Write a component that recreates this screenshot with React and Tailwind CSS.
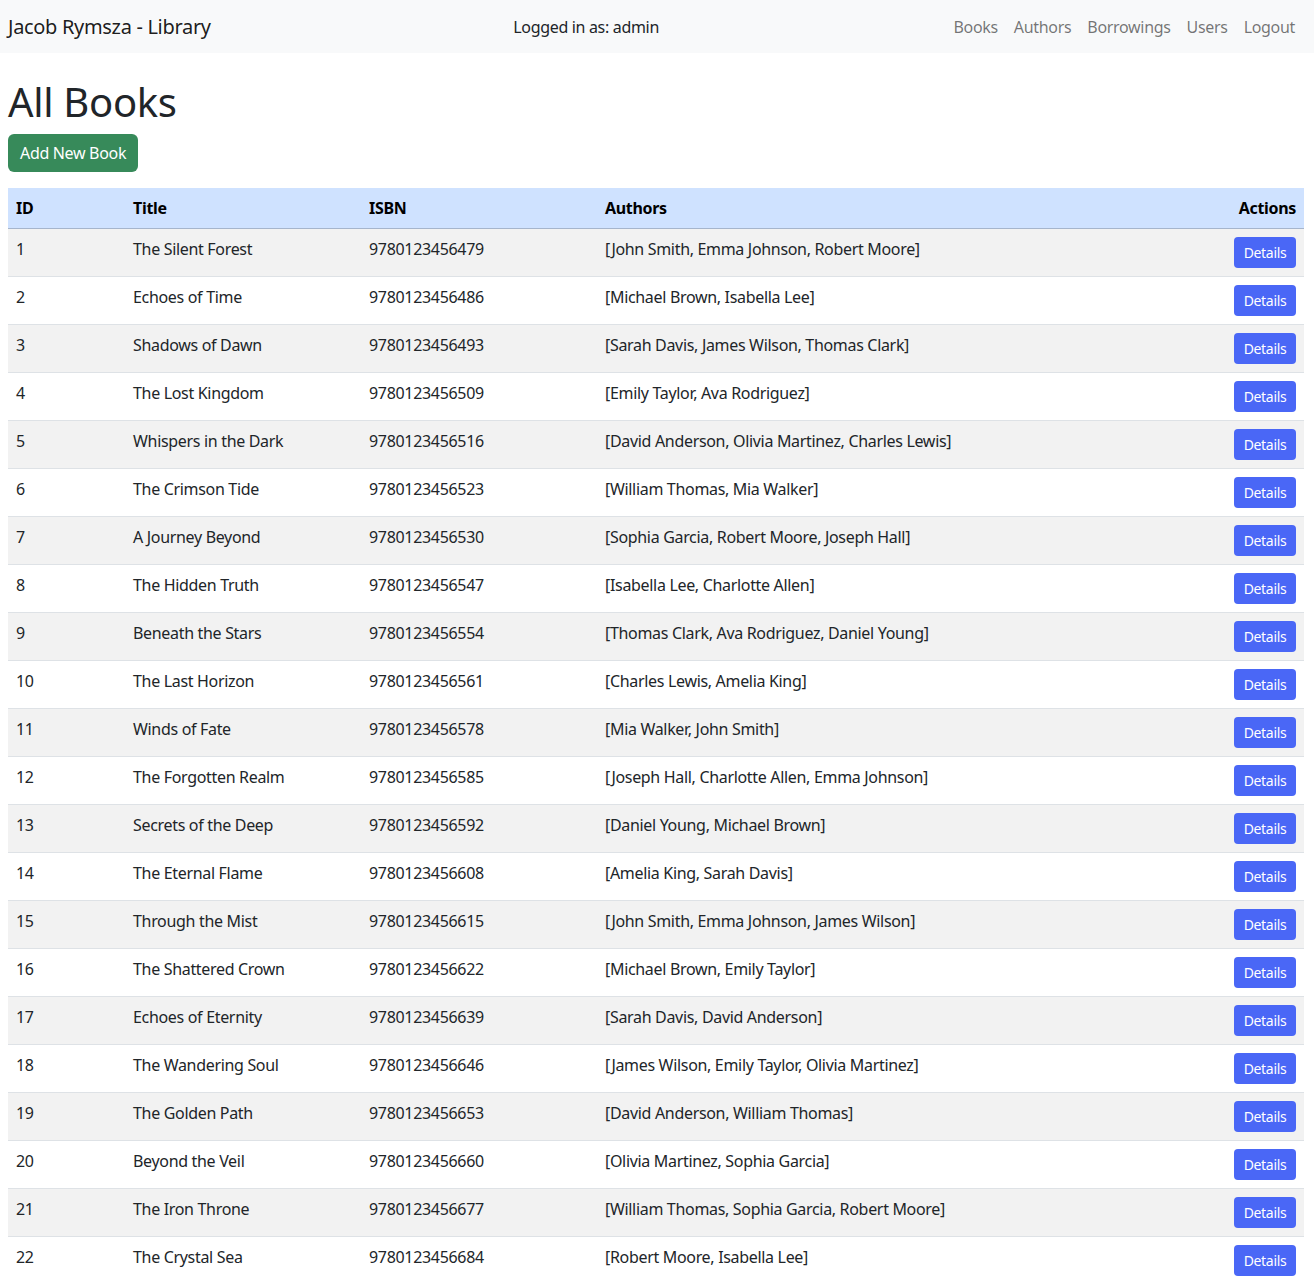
import React from "react";

const books = [
  [1, "The Silent Forest", "9780123456479", "[John Smith, Emma Johnson, Robert Moore]"],
  [2, "Echoes of Time", "9780123456486", "[Michael Brown, Isabella Lee]"],
  [3, "Shadows of Dawn", "9780123456493", "[Sarah Davis, James Wilson, Thomas Clark]"],
  [4, "The Lost Kingdom", "9780123456509", "[Emily Taylor, Ava Rodriguez]"],
  [5, "Whispers in the Dark", "9780123456516", "[David Anderson, Olivia Martinez, Charles Lewis]"],
  [6, "The Crimson Tide", "9780123456523", "[William Thomas, Mia Walker]"],
  [7, "A Journey Beyond", "9780123456530", "[Sophia Garcia, Robert Moore, Joseph Hall]"],
  [8, "The Hidden Truth", "9780123456547", "[Isabella Lee, Charlotte Allen]"],
  [9, "Beneath the Stars", "9780123456554", "[Thomas Clark, Ava Rodriguez, Daniel Young]"],
  [10, "The Last Horizon", "9780123456561", "[Charles Lewis, Amelia King]"],
  [11, "Winds of Fate", "9780123456578", "[Mia Walker, John Smith]"],
  [12, "The Forgotten Realm", "9780123456585", "[Joseph Hall, Charlotte Allen, Emma Johnson]"],
  [13, "Secrets of the Deep", "9780123456592", "[Daniel Young, Michael Brown]"],
  [14, "The Eternal Flame", "9780123456608", "[Amelia King, Sarah Davis]"],
  [15, "Through the Mist", "9780123456615", "[John Smith, Emma Johnson, James Wilson]"],
  [16, "The Shattered Crown", "9780123456622", "[Michael Brown, Emily Taylor]"],
  [17, "Echoes of Eternity", "9780123456639", "[Sarah Davis, David Anderson]"],
  [18, "The Wandering Soul", "9780123456646", "[James Wilson, Emily Taylor, Olivia Martinez]"],
  [19, "The Golden Path", "9780123456653", "[David Anderson, William Thomas]"],
  [20, "Beyond the Veil", "9780123456660", "[Olivia Martinez, Sophia Garcia]"],
  [21, "The Iron Throne", "9780123456677", "[William Thomas, Sophia Garcia, Robert Moore]"],
  [22, "The Crystal Sea", "9780123456684", "[Robert Moore, Isabella Lee]"],
];

function Navbar() {
  return (
    <nav className="flex h-[53px] items-center justify-between bg-[#f8f9fa] pl-2 pr-[11px]">
      <span className="mr-4 text-[20px] text-black/90">Jacob Rymsza - Library</span>
      <span className="text-[#212529]">Logged in as: admin</span>
      <div className="flex">
        {["Books", "Authors", "Borrowings", "Users", "Logout"].map((l) => (
          <a key={l} href="#" className="px-2 text-black/55">
            {l}
          </a>
        ))}
      </div>
    </nav>
  );
}

export default function App() {
  return (
    <div
      className="min-h-screen bg-white text-[16px] tracking-[-0.02em] text-[#212529]"
      style={{ fontFamily: '"Noto Sans", sans-serif' }}
    >
      <Navbar />
      <div className="pl-2 pr-[10px]">
        <h1 className="mt-[25px] mb-2 text-[40px] leading-[48px]">All Books</h1>
        <button className="mb-4 h-[38px] rounded-md bg-[#378a5a] px-3 text-white">Add New Book</button>
        <table className="w-full border-collapse text-left">
          <thead>
            <tr className="h-10 border-b border-[#a6b5cc] bg-[#cfe2ff] font-bold text-black">
              <th className="w-[117px] px-2">ID</th>
              <th className="w-[236px] px-2">Title</th>
              <th className="w-[236px] px-2">ISBN</th>
              <th className="px-2">Authors</th>
              <th className="px-2 text-right">Actions</th>
            </tr>
          </thead>
          <tbody>
            {books.map(([id, title, isbn, authors], i) => (
              <tr key={id} className={`h-12 border-b border-[#dee2e6] ${i % 2 === 0 ? "bg-[#f2f2f2]" : "bg-white"}`}>
                <td className="px-2 pb-[6px]">{id}</td>
                <td className="px-2 pb-[6px]">{title}</td>
                <td className="px-2 pb-[6px]">{isbn}</td>
                <td className="px-2 pb-[6px]">{authors}</td>
                <td className="px-2 text-right">
                  <button className="h-[31px] w-[62px] rounded bg-[#4a67f6] text-[14px] text-white">Details</button>
                </td>
              </tr>
            ))}
          </tbody>
        </table>
      </div>
    </div>
  );
}
